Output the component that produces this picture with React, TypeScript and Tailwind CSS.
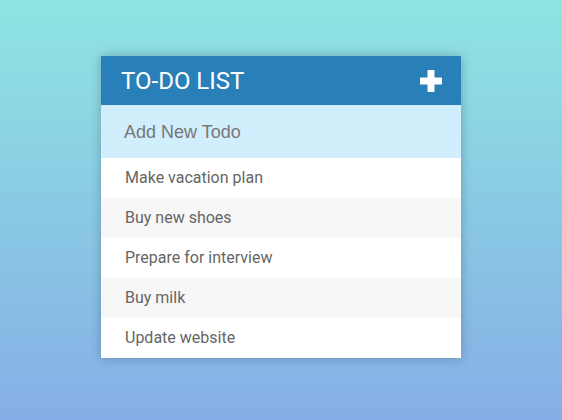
import React from "react";

const items = ["Make vacation plan", "Buy new shoes", "Prepare for interview", "Buy milk", "Update website"];

export default function App() {
  return (
    <div className="w-[562px] h-[420px] bg-[linear-gradient(to_bottom,#8ee5e2,#86aee6)] flex justify-center pt-[56px]" style={{ fontFamily: "Roboto, sans-serif" }}>
      <div className="w-[360px] h-fit bg-white shadow-[0_0_10px_rgba(0,0,0,0.25)]">
        <div className="h-[49px] bg-[#2980b9] flex items-center justify-between pl-[20px] pr-[19px]">
          <h1 className="text-white text-[24px] font-normal leading-none mt-[1px]">TO-DO LIST</h1>
          <svg width="22" height="22" viewBox="0 0 22 22" className="mt-[1px]">
            <rect x="7.5" y="0" width="7" height="22" rx="0.8" fill="#fff" />
            <rect x="0" y="7.5" width="22" height="7" rx="0.8" fill="#fff" />
          </svg>
        </div>
        <div className="h-[53px] bg-[#d1eefc] flex items-center pl-[23px]">
          <span className="text-[18px] text-[#777] leading-none" style={{ fontFamily: '"Liberation Sans", Arial, sans-serif' }}>Add New Todo</span>
        </div>
        <ul>
          {items.map((t, i) => (
            <li key={t} className={`h-[40px] flex items-center pl-[24px] text-[16px] text-[#666] ${i % 2 === 1 ? "bg-[#f7f7f7]" : "bg-white"}`}>
              {t}
            </li>
          ))}
        </ul>
      </div>
    </div>
  );
}
